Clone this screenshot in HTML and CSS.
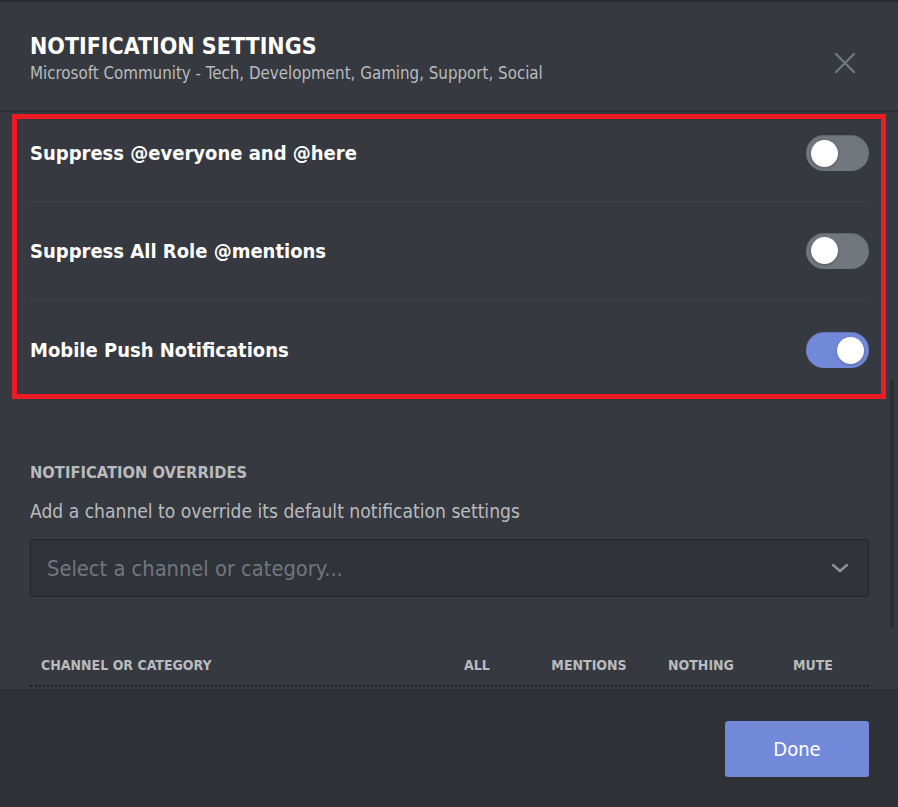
FILE: index.html
```html
<!DOCTYPE html>
<html lang="en">
<head>
<meta charset="utf-8">
<title>Notification Settings</title>
<link rel="stylesheet" href="styles.css">
</head>
<body>
<div class="modal">
  <header class="modal-header">
    <div class="heading">
      <h1 class="title">NOTIFICATION SETTINGS</h1>
      <p class="subtitle">Microsoft Community - Tech, Development, Gaming, Support, Social</p>
    </div>
    <button class="close" aria-label="Close">
      <svg width="22" height="22" viewBox="0 0 22 22"><path d="M2 2 L20 20 M20 2 L2 20" stroke="#72767d" stroke-width="2.4" stroke-linecap="round" fill="none"/></svg>
    </button>
  </header>
  <main class="modal-body">
    <div class="highlight">
      <div class="row row-first">
        <span class="row-label">Suppress @everyone and @here</span>
        <span class="toggle"><span class="knob"></span></span>
      </div>
      <div class="row">
        <span class="row-label">Suppress All Role @mentions</span>
        <span class="toggle"><span class="knob"></span></span>
      </div>
      <div class="row row-last">
        <span class="row-label">Mobile Push Notifications</span>
        <span class="toggle on"><span class="knob"></span></span>
      </div>
    </div>
    <section class="overrides">
      <h2 class="section-title">NOTIFICATION OVERRIDES</h2>
      <p class="section-desc">Add a channel to override its default notification settings</p>
      <div class="select">
        <span class="placeholder">Select a channel or category...</span>
        <svg class="chevron" width="18" height="12" viewBox="0 0 18 12"><path d="M2 3 L9 9 L16 3" stroke="#8e9297" stroke-width="2.4" fill="none" stroke-linecap="round" stroke-linejoin="round"/></svg>
      </div>
      <div class="table-head">
        <span class="col-name">CHANNEL OR CATEGORY</span>
        <span class="col">ALL</span>
        <span class="col">MENTIONS</span>
        <span class="col">NOTHING</span>
        <span class="col">MUTE</span>
      </div>
    </section>
    <div class="scroll-thumb"></div>
  </main>
  <footer class="modal-footer">
    <button class="done">Done</button>
  </footer>
</div>
</body>
</html>
```
FILE: styles.css
```css
* { box-sizing: border-box; }
html, body { margin: 0; padding: 0; }
body {
  background: #36393f;
  font-family: "DejaVu Sans Condensed", "Open Sans", sans-serif;
  color: #dcddde;
}
.modal {
  height: 807px;
  display: flex;
  flex-direction: column;
  background: #36393f;
  overflow: hidden;
}
.modal-header {
  height: 112px;
  flex: none;
  border-top: 2px solid #2a2c30;
  border-bottom: 2px solid #2c2f33;
  display: flex;
  align-items: flex-start;
  justify-content: space-between;
  padding: 30px 42px 0 30px;
}
.title {
  margin: 0;
  font-size: 23px;
  line-height: 28px;
  font-weight: 700;
  color: #ffffff;
}
.subtitle {
  margin: 3px 0 0;
  font-size: 16.8px;
  line-height: 20px;
  color: #b9bbbe;
}
.close {
  margin-top: 20px;
  background: none;
  border: 0;
  padding: 0;
  width: 22px;
  height: 22px;
  display: flex;
}
.modal-body {
  flex: 1;
  position: relative;
  overflow: hidden;
  padding-top: 2px;
}
.highlight {
  margin: 0 12px;
  border: 5px solid #ed1c24;
  padding: 0 12px 0 13px;
}
.row {
  height: 98px;
  display: flex;
  align-items: center;
  justify-content: space-between;
  border-bottom: 1px solid #40434a;
}
.row-first { height: 83px; padding-bottom: 14px; }
.row-last { height: 94px; padding-top: 6px; border-bottom: 0; }
.row-label {
  font-size: 20px;
  font-weight: 700;
  color: #ffffff;
}
.toggle {
  width: 63px;
  height: 36px;
  border-radius: 18px;
  background: #72767d;
  display: flex;
  align-items: center;
  padding: 0 5px;
  box-shadow: inset 0 1px 1px rgba(0,0,0,0.15);
}
.toggle.on { background: #7289da; justify-content: flex-end; }
.knob {
  width: 27px;
  height: 27px;
  border-radius: 50%;
  background: #ffffff;
  box-shadow: 0 1px 3px rgba(0,0,0,0.25);
}
.overrides { padding: 0 29px 0 30px; }
.section-title {
  margin: 64px 0 0;
  font-size: 16.4px;
  line-height: 20px;
  font-weight: 700;
  color: #b9bbbe;
}
.section-desc {
  margin: 17px 0 0;
  font-size: 19.1px;
  line-height: 24px;
  color: #b9bbbe;
}
.select {
  margin-top: 15px;
  height: 58px;
  background: #303339;
  border: 1px solid #222428;
  border-radius: 3px;
  display: flex;
  align-items: center;
  justify-content: space-between;
  padding: 0 19px 0 16px;
}
.placeholder {
  font-size: 21.7px;
  color: #72767d;
}
.table-head {
  margin-top: 59px;
  display: flex;
  align-items: center;
  padding: 0 0 11px 11px;
  border-bottom: 2px dotted #1e1f22;
  font-size: 14px;
  line-height: 18px;
  font-weight: 700;
  color: #b9bbbe;
}
.col-name { flex: 1; }
.col { width: 112px; text-align: center; }
.scroll-thumb {
  position: absolute;
  right: 4px;
  top: 267px;
  width: 4px;
  height: 248px;
  border-radius: 2px;
  background: #2b2d32;
}
.modal-footer {
  height: 118px;
  flex: none;
  background: #2f3136;
  display: flex;
  justify-content: flex-end;
  align-items: flex-start;
  padding: 32px 29px 0 0;
}
.done {
  width: 144px;
  height: 56px;
  border: 0;
  border-radius: 3px;
  background: #7289da;
  color: #ffffff;
  font-family: inherit;
  font-size: 20px;
  font-weight: 400;
}
```
